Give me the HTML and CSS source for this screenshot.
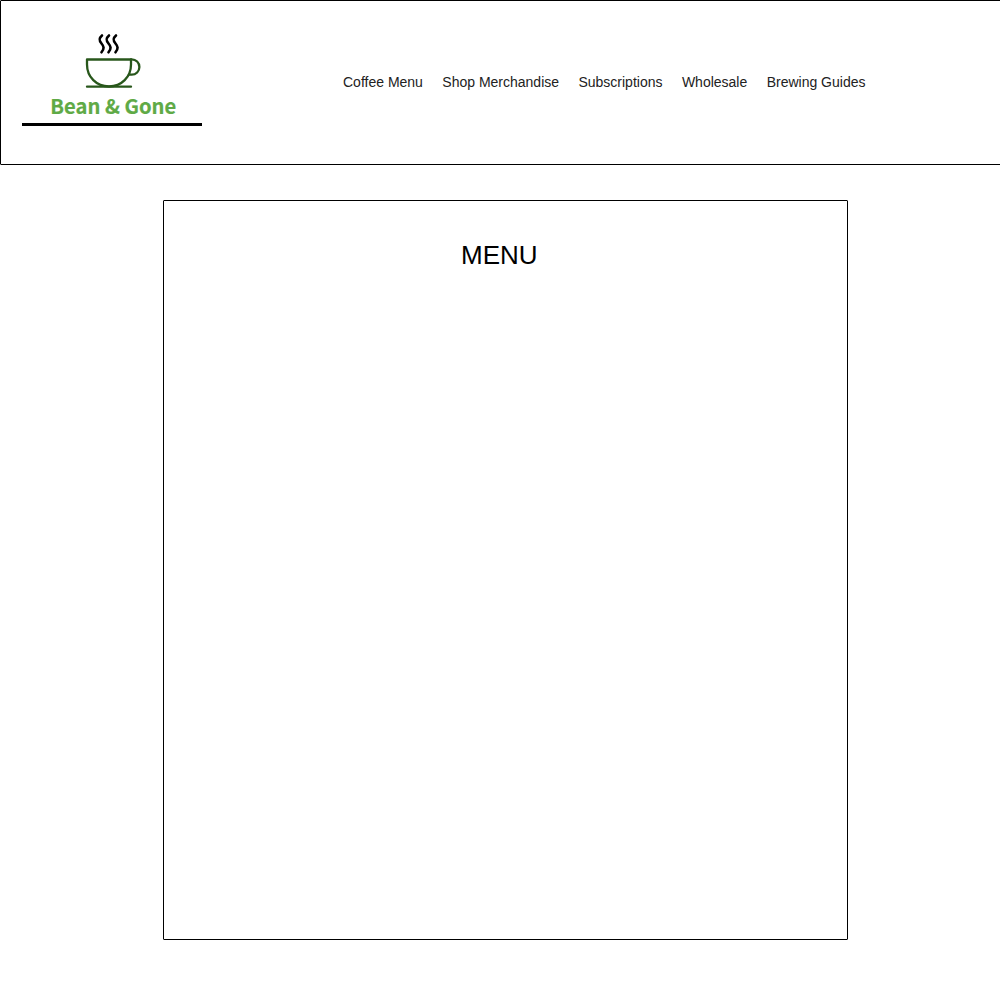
FILE: index.html
```html
<!DOCTYPE html>
<html lang="en">
<head>
<meta charset="utf-8">
<title>Bean &amp; Gone</title>
<link rel="stylesheet" href="styles.css">
</head>
<body>
<header class="header">
  <a class="logo">
    <svg class="logo-cup" width="60" height="60" viewBox="82 30 60 60" fill="none" stroke-linecap="round" stroke-linejoin="round">
      <g stroke="#000" stroke-width="2.6">
        <path d="M102 35.500C98.500 38.500 99 40.500 101.500 43.500C104 46.500 104.500 48.500 101.500 52.300"/>
        <path d="M109 35.500C105.500 38.500 106 40.500 108.500 43.500C111 46.500 111.500 48.500 108.500 52.300"/>
        <path d="M116 35.500C112.500 38.500 113 40.500 115.500 43.500C118 46.500 118.500 48.500 115.500 52.300"/>
      </g>
      <g stroke="#28571b" stroke-width="2.3">
        <path d="M87 59.500H131V64.500C131 77 121.500 86.500 109 86.500S87 77 87 64.500Z"/>
        <path d="M131 59.300H131.700A7.700 7.700 0 0 1 131.700 74.700H129M87 86.700H131"/>
      </g>
    </svg>
    <span class="logo-name">Bean &amp; Gone</span>
  </a>
  <nav class="nav">
    <a>Coffee Menu</a>
    <a>Shop Merchandise</a>
    <a>Subscriptions</a>
    <a>Wholesale</a>
    <a>Brewing Guides</a>
  </nav>
</header>
<main class="menu">
  <h1 class="menu-title">MENU</h1>
</main>
</body>
</html>
```

FILE: styles.css
```css
* { box-sizing: border-box; }
body {
  margin: 0;
  background: #fff;
  font-family: "Liberation Sans", Arial, sans-serif;
  overflow-x: hidden;
}
.header {
  display: flex;
  width: 1010px;
  height: 165px;
  padding: 29px 0 0 21px;
  border: 1px solid #000;
  border-radius: 1px;
}
.logo {
  display: block;
  width: 180px;
  height: 96px;
  border-bottom: 3px solid #000;
}
.logo-cup {
  display: block;
  margin-left: 60px;
}
.logo-name {
  display: block;
  margin-left: 28.3px;
  color: #5faa46;
  font: bold 20.2px/32px "Noto Sans CJK SC", sans-serif;
  -webkit-text-stroke: 0.2px #5faa46;
  white-space: nowrap;
}
.nav {
  display: flex;
  gap: 19.4px;
  margin: 44px 0 0 141px;
  color: #222;
  font-size: 14px;
  line-height: 16px;
  white-space: nowrap;
}
.menu {
  width: 685px;
  height: 740px;
  margin: 35px 0 0 163px;
  padding-top: 39px;
  border: 1px solid #000;
  border-radius: 1px;
}
.menu-title {
  margin: 0 0 0 295px;
  padding-left: 2px;
  font-size: 26px;
  font-weight: normal;
  line-height: 30px;
}
```
